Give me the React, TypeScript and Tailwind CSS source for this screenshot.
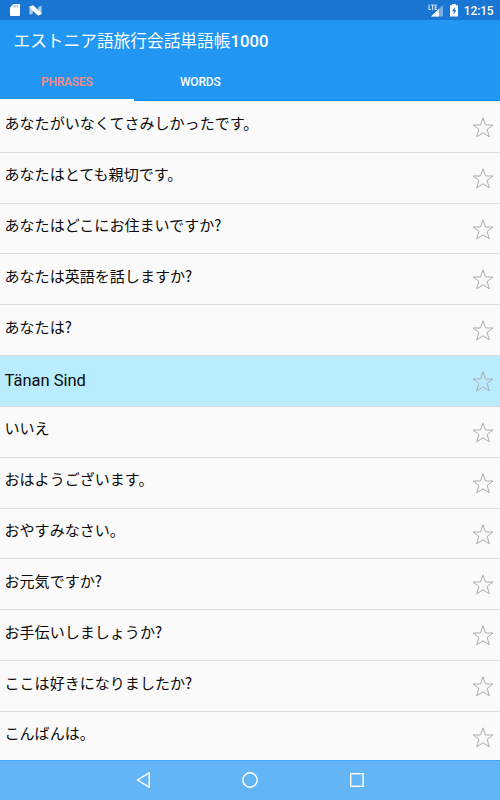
import clsx from 'clsx'

interface Phrase {
  text: string
  translated?: boolean
}

const phrases: Phrase[] = [
  { text: 'あなたがいなくてさみしかったです。' },
  { text: 'あなたはとても親切です。' },
  { text: 'あなたはどこにお住まいですか?' },
  { text: 'あなたは英語を話しますか?' },
  { text: 'あなたは?' },
  { text: 'Tänan Sind', translated: true },
  { text: 'いいえ' },
  { text: 'おはようございます。' },
  { text: 'おやすみなさい。' },
  { text: 'お元気ですか?' },
  { text: 'お手伝いしましょうか?' },
  { text: 'ここは好きになりましたか?' },
  { text: 'こんばんは。' },
]

function StatusBar() {
  return (
    <div className="flex h-5 shrink-0 items-center justify-between bg-[#1976d2] pl-2.5 pr-[6.5px] text-white">
      <div className="flex items-center gap-[9px]">
        {/* SD card */}
        <svg width="10" height="12" viewBox="0 0 10 12">
          <path d="M3.4 0H9Q10 0 10 1V11Q10 12 9 12H1Q0 12 0 11V3.4Z" fill="#fff" />
          <path d="M4 1.4V3.4M5.8 1.4V3.4M7.6 1.4V3.4" stroke="#5a9be0" strokeWidth="0.9" />
        </svg>
        {/* Android N */}
        <svg width="13" height="11" viewBox="0 0 13 11">
          <path d="M0.4 1.8L3.8 0.2V8.4L0.4 10ZM9.2 2.2L12.6 0.6V8.8L9.2 10.6Z" fill="#a9cbee" />
          <path d="M0.4 1.8L4.2 0.2L9 4.8L12.6 8.8L9.2 10.8L4.2 6.2L0.4 1.8Z" fill="#fff" />
        </svg>
      </div>
      <div className="flex items-center">
        <svg width="16" height="13" viewBox="0 0 16 13">
          <path d="M15 1V12.5H3Z" fill="#76aee6" />
          <path d="M11 5V12.5H3Z" fill="#fff" />
          <path d="M1 0.5V5.5H3M3 1H6.2M4.6 1V6M9 1H7.2V5.5H9M7.2 3.2H8.8" fill="none" stroke="#d5e6f8" strokeWidth="1.1" />
        </svg>
        <svg className="ml-[6px]" width="8" height="13" viewBox="0 0 8 13">
          <path d="M2.2 0H5.8V1.3H8V12.5H0V1.3H2.2Z" fill="#fff" />
          <path d="M4.8 3L2 7.3H3.7V10.4L6.3 6.1H4.8Z" fill="#1976d2" />
        </svg>
        <span className="ml-[6px] pt-px text-[12px] leading-5 font-medium tracking-[-0.15px]">12:15</span>
      </div>
    </div>
  )
}

function Header() {
  return (
    <header className="shrink-0 bg-[#2196f3] text-white">
      <h1 className="h-[43px] pl-[13.5px] text-[16.7px] leading-[44px] font-normal">
        エストニア語旅行会話単語帳<span className="font-medium">1000</span>
      </h1>
      <div className="flex h-[38px] border-b border-[#0a86f0] text-center text-[12px] leading-[39px] font-medium tracking-[-0.2px]">
        <div className="flex w-[133.5px] flex-col justify-between text-[#ff8a80]">
          <span className="h-9">PHRASES</span>
          <span className="-mb-px h-[2px] bg-[#fafafa]" />
        </div>
        <div className="w-[133.5px]">WORDS</div>
      </div>
    </header>
  )
}

function Star() {
  return (
    <svg width="22" height="21" viewBox="0 0 22 21" fill="none" stroke="#acacac" strokeWidth="1">
      <path d="M11 0.8L13.5 8H21L15.1 12.4L17.3 19.8L11 15.8L4.7 19.8L6.9 12.4L1 8H8.5Z" />
    </svg>
  )
}

function PhraseRow({ text, translated }: Phrase) {
  return (
    <li
      className={clsx(
        'flex h-[50.83px] shrink-0 items-center justify-between border-b border-[#dcdcdc] pl-[4.5px] pr-[6.5px]',
        translated && 'bg-[#b9ecff]',
      )}
    >
      <span
        className={
          translated
            ? 'pb-px text-[16.5px] leading-6'
            : "pb-[7px] font-['Noto_Sans_CJK_JP',sans-serif] text-[15.05px] leading-6"
        }
      >
        {text}
      </span>
      <span className="pt-px">
        <Star />
      </span>
    </li>
  )
}

function NavBar() {
  return (
    <nav className="flex h-10 shrink-0 items-center justify-center gap-[90px] border-t border-[#42a5f5] bg-[#64b5f6] pb-[2px]">
      <svg width="16" height="18" viewBox="0 0 16 18" fill="none" stroke="#fff" strokeWidth="1.4" strokeLinejoin="round">
        <path d="M2.4 9L14.2 1.8V16.2Z" />
      </svg>
      <svg width="18" height="18" viewBox="0 0 18 18" fill="none" stroke="#fff" strokeWidth="1.4">
        <circle cx="9" cy="9" r="7.2" />
      </svg>
      <svg width="16" height="18" viewBox="0 0 16 18" fill="none" stroke="#fff" strokeWidth="1.4">
        <rect x="1.7" y="2.7" width="12.4" height="12.6" />
      </svg>
    </nav>
  )
}

export default function App() {
  return (
    <div className="flex h-[800px] w-[500px] flex-col overflow-hidden bg-[#fafafa] font-[Roboto,'Noto_Sans_CJK_JP',sans-serif] text-[#0a0a0a]">
      <StatusBar />
      <Header />
      <ul className="flex min-h-0 flex-1 flex-col overflow-hidden pt-px">
        {phrases.map((phrase) => (
          <PhraseRow key={phrase.text} {...phrase} />
        ))}
      </ul>
      <NavBar />
    </div>
  )
}
